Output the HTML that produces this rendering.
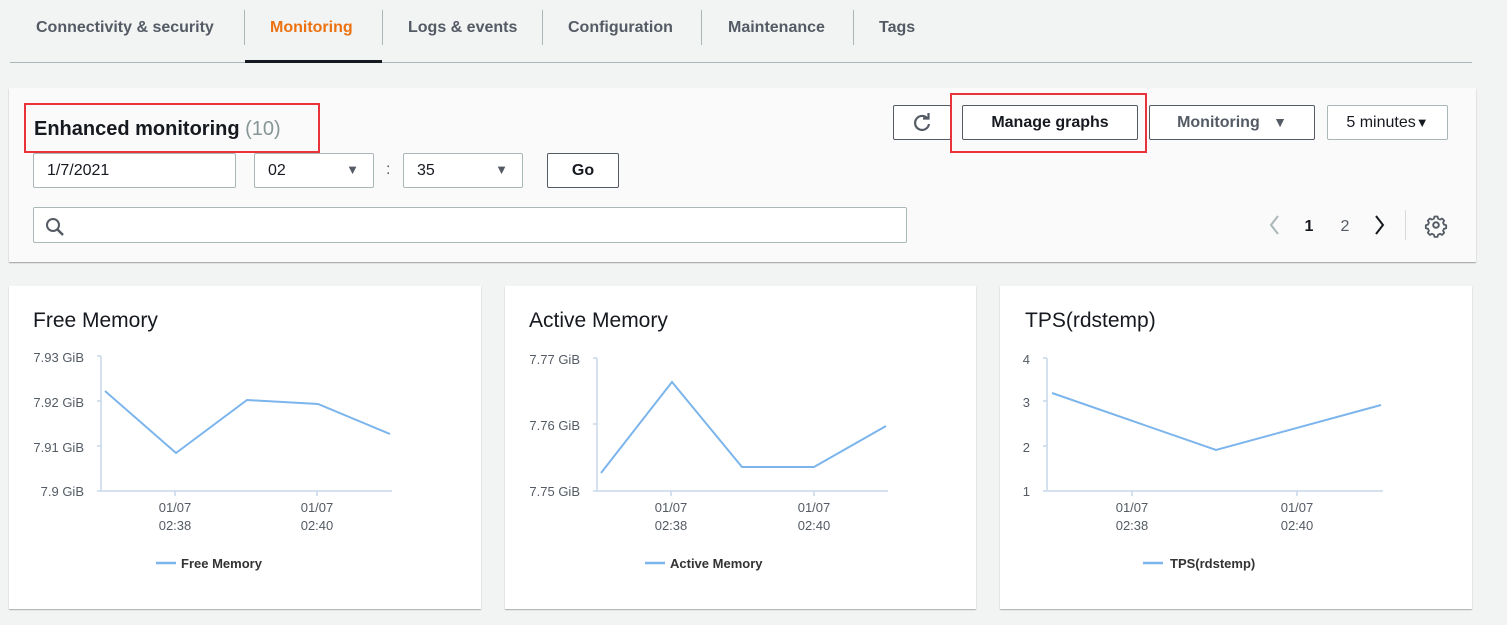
<!DOCTYPE html><html><head><style>
body{margin:0;width:1507px;height:625px;background:#f2f3f3;font-family:"Liberation Sans",sans-serif;position:relative;overflow:hidden}
.a{position:absolute}
.tab{position:absolute;top:19px;font-size:16px;font-weight:bold;color:#545b64}
.sep{position:absolute;top:10px;width:1px;height:35px;background:#aab7b8}
.box{position:absolute;background:#fff;border:1px solid #aab7b8;border-radius:2px;box-sizing:border-box;font-size:16px;color:#16191f}
.btn{position:absolute;background:#fff;border:1px solid #545b64;border-radius:2px;box-sizing:border-box;font-size:16px;font-weight:bold;color:#16191f;text-align:center}
.card{position:absolute;top:286px;height:323px;background:#fff;box-shadow:0 1px 1px rgba(0,0,0,.3);}
.ct{position:absolute;top:309px;font-size:21px;color:#16191f}
.red{position:absolute;border:2px solid #e8333a;box-sizing:border-box}
</style></head><body>
<div class="tab" style="left:36px">Connectivity &amp; security</div>
<div class="sep" style="left:244px"></div>
<div class="tab" style="left:270px;color:#ec7211">Monitoring</div>
<div class="sep" style="left:382px"></div>
<div class="tab" style="left:408px">Logs &amp; events</div>
<div class="sep" style="left:542px"></div>
<div class="tab" style="left:568px">Configuration</div>
<div class="sep" style="left:701px"></div>
<div class="tab" style="left:728px">Maintenance</div>
<div class="sep" style="left:853px"></div>
<div class="tab" style="left:879px">Tags</div>
<div class="a" style="left:10px;top:62px;width:1462px;height:1px;background:#aab7b8"></div>
<div class="a" style="left:245px;top:60px;width:137px;height:3px;background:#16191f"></div>

<div class="a" style="left:9px;top:88px;width:1467px;height:174px;background:#fafafa;box-shadow:0 1px 1px rgba(0,0,0,.35)"></div>
<div class="a" style="left:34px;top:118px;font-size:20px;font-weight:bold;color:#16191f">Enhanced monitoring <span style="font-weight:normal;color:#879596">(10)</span></div>
<div class="red" style="left:24px;top:103px;width:296px;height:50px"></div>
<div class="box" style="left:33px;top:153px;width:203px;height:35px;padding:8px 13px">1/7/2021</div>
<div class="box" style="left:254px;top:153px;width:120px;height:35px;padding:8px 13px">02<span style="position:absolute;right:14px;font-size:13px;color:#545b64">▼</span></div>
<div class="a" style="left:386px;top:161px;font-size:16px;color:#545b64">:</div>
<div class="box" style="left:403px;top:153px;width:120px;height:35px;padding:8px 13px">35<span style="position:absolute;right:14px;font-size:13px;color:#545b64">▼</span></div>
<div class="btn" style="left:547px;top:153px;width:72px;height:35px;line-height:33px">Go</div>
<div class="box" style="left:33px;top:207px;width:874px;height:36px"><svg class="a" style="left:10px;top:8px" width="22" height="22" viewBox="0 0 22 22"><circle cx="9" cy="9" r="6" fill="none" stroke="#545b64" stroke-width="2"/><path d="M13.5 13.5L19 19" stroke="#545b64" stroke-width="2.5"/></svg></div>

<div class="btn" style="left:893px;top:105px;width:58px;height:35px"><svg class="a" style="left:17px;top:6px" width="22" height="22" viewBox="0 0 22 22"><path d="M16.5 6.5A7 7 0 1 0 18 12" fill="none" stroke="#545b64" stroke-width="2.2"/><path d="M12 6.5h5.5V1" fill="none" stroke="#545b64" stroke-width="2.2"/></svg></div>
<div class="btn" style="left:962px;top:105px;width:176px;height:35px;line-height:33px">Manage graphs</div>
<div class="red" style="left:950px;top:93px;width:197px;height:60px"></div>
<div class="btn" style="left:1149px;top:105px;width:166px;height:35px;line-height:33px;color:#545b64">Monitoring&nbsp;&nbsp;&nbsp;<span style="font-size:14px">▼</span></div>
<div class="box" style="left:1327px;top:105px;width:121px;height:35px;line-height:33px;text-align:center;color:#16191f">5 minutes<span style="font-size:13px">▼</span></div>

<svg class="a" style="left:1260px;top:210px" width="200" height="30" viewBox="1260 210 200 30">
<path d="M1278 216l-7 9 7 9" fill="none" stroke="#aab7b8" stroke-width="2"/>
<text x="1309" y="231" font-size="16" font-weight="bold" fill="#16191f" text-anchor="middle" font-family="Liberation Sans">1</text>
<text x="1345" y="231" font-size="16" fill="#545b64" text-anchor="middle" font-family="Liberation Sans">2</text>
<path d="M1376 216l7 9-7 9" fill="none" stroke="#16191f" stroke-width="2"/>
<line x1="1405.5" y1="208" x2="1405.5" y2="243" stroke="#d5dbdb"/>
<circle cx="1436" cy="225" r="2.8" fill="none" stroke="#545b64" stroke-width="2"/>
<path d="M1434.5 216.5h3l.6 2.2 2 .9 2-1.1 2.1 2.1-1.1 2 .9 2 2.2.6v3l-2.2.6-.9 2 1.1 2-2.1 2.1-2-1.1-2 .9-.6 2.2h-3l-.6-2.2-2-.9-2 1.1-2.1-2.1 1.1-2-.9-2-2.2-.6v-3l2.2-.6.9-2-1.1-2 2.1-2.1 2 1.1 2-.9z" fill="none" stroke="#545b64" stroke-width="1.8" stroke-linejoin="round"/>
</svg>

<div class="card" style="left:9px;width:472px"></div>
<div class="card" style="left:505px;width:471px"></div>
<div class="card" style="left:1000px;width:472px"></div>
<div class="ct" style="left:33px">Free Memory</div>
<div class="ct" style="left:529px">Active Memory</div>
<div class="ct" style="left:1025px">TPS(rdstemp)</div>

<svg class="a" style="left:0;top:0" width="1507" height="625" font-family="Liberation Sans" font-size="13" fill="#545b64">
<g stroke="#c9d7ea" stroke-width="1.5" fill="none">
<path d="M101 356V491M97 356h4M97 401h4M97 446h4M97 491H392M175 491v5M317 491v5"/>
<path d="M597 358V491M593 358h4M593 424h4M593 491H888M671 491v5M814 491v5"/>
<path d="M1047 358V491M1043 358h4M1043 401h4M1043 446h4M1043 491H1383M1132 491v5M1297 491v5"/>
</g>
<g stroke="#7cb5ec" stroke-width="2" fill="none">
<path d="M105 391L176 453L247 400L318 404L390 434"/>
<path d="M601 473L672 382L742 467L814 467L886 426"/>
<path d="M1052 393L1216 450L1381 405"/>
</g>
<g stroke="#7cb5ec" stroke-width="2.5" fill="none">
<path d="M156 563h20M645 563h20M1143 563h20"/>
</g>
<g text-anchor="end">
<text x="84" y="362">7.93 GiB</text><text x="84" y="407">7.92 GiB</text><text x="84" y="452">7.91 GiB</text><text x="84" y="496">7.9 GiB</text>
<text x="580" y="364">7.77 GiB</text><text x="580" y="430">7.76 GiB</text><text x="580" y="496">7.75 GiB</text>
<text x="1030" y="364">4</text><text x="1030" y="407">3</text><text x="1030" y="452">2</text><text x="1030" y="496">1</text>
</g>
<g text-anchor="middle">
<text x="175" y="512">01/07</text><text x="175" y="530">02:38</text><text x="317" y="512">01/07</text><text x="317" y="530">02:40</text>
<text x="671" y="512">01/07</text><text x="671" y="530">02:38</text><text x="814" y="512">01/07</text><text x="814" y="530">02:40</text>
<text x="1132" y="512">01/07</text><text x="1132" y="530">02:38</text><text x="1297" y="512">01/07</text><text x="1297" y="530">02:40</text>
</g>
<g font-weight="bold" fill="#333">
<text x="181" y="568">Free Memory</text><text x="670" y="568">Active Memory</text><text x="1170" y="568">TPS(rdstemp)</text>
</g>
</svg>
</body></html>
